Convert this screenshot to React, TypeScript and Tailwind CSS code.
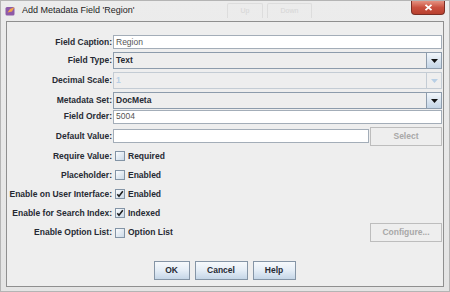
import React from 'react';

const Check: React.FC<{ checked?: boolean }> = ({ checked }) => (
  <span className="ml-[2px] w-[10px] h-[10px] shrink-0 border border-[#8394a6] bg-linear-to-br from-[#fbfcfe] to-[#cbd9e7] flex items-center justify-center">
    {checked && (
      <svg width="8" height="8" viewBox="0 0 8 8">
        <path d="M1.3 4.2 L3 6.3 L6.8 1.2" stroke="#1c1c1c" strokeWidth="1.5" fill="none" />
      </svg>
    )}
  </span>
);

const Row: React.FC<{ label: string; className?: string; children?: React.ReactNode }> = ({ label, className, children }) => (
  <div className={`flex items-center ${className ?? ''}`}>
    <div className="w-[105px] mr-[1px] shrink-0 text-right font-bold text-[8.5px] leading-none text-[#262a33]">{label}</div>
    <div className="flex-1 flex items-center min-w-0 h-full">{children}</div>
  </div>
);

const Combo: React.FC<{ value: string; disabled?: boolean }> = ({ value, disabled }) => (
  <div className={`flex-1 h-[17px] flex border ${disabled ? 'border-[#c4ccd4]' : 'border-[#8d9cac]'} bg-[#eeeeee]`}>
    <div className={`flex-1 flex items-center pl-[2px] text-[8.5px] font-bold ${disabled ? 'text-[#b8cfe5]' : 'text-[#262a33]'}`}>{value}</div>
    <div className={`w-[15px] flex items-center justify-center border-l ${disabled ? 'border-[#c4ccd4] bg-[#eeeeee]' : 'border-[#8d9cac] bg-linear-to-b from-[#f2f6fa] to-[#c4d5e6]'}`}>
      <svg width="7" height="4" viewBox="0 0 7 4">
        <path d="M0 0 H7 L3.5 4 Z" fill={disabled ? '#b8cfe5' : '#111'} />
      </svg>
    </div>
  </div>
);

const Field: React.FC<{ value?: string; className?: string }> = ({ value, className }) => (
  <div className={`h-[14px] flex items-center border border-[#a3adb8] bg-white pl-[2px] text-[8.5px] text-[#555] ${className ?? 'flex-1'}`}>
    {value}
  </div>
);

const Btn: React.FC<{ label: string; w: string }> = ({ label, w }) => (
  <div className={`${w} h-[19px] flex items-center justify-center border border-[#8595a6] bg-linear-to-b from-[#f6f9fc] via-[#e4edf6] to-[#c5d6e7] text-[8.5px] font-bold text-[#262a33]`}>
    {label}
  </div>
);

const DisabledBtn: React.FC<{ label: string }> = ({ label }) => (
  <div className="w-[72px] h-[19px] shrink-0 flex items-center justify-center border border-[#bdbdbd] bg-[#eeeeee] text-[8.5px] font-bold text-[#a8a8a8]">
    {label}
  </div>
);

export default function App() {
  return (
    <div className="w-[450px] h-[292px] flex flex-col bg-linear-to-b from-[#ececec] to-[#e4e4e4] border border-[#b4b4b4] font-['Liberation_Sans',Arial,sans-serif] overflow-hidden">
      {/* Title bar */}
      <div className="h-[20px] shrink-0 flex items-start">
        <div className="w-[226px] shrink-0 flex items-center h-[19px] pl-[4px]">
          <svg width="11" height="10" viewBox="0 0 11 10">
            <rect x="0.5" y="1" width="9" height="8.5" rx="1.5" fill="#8e5aa8" />
            <path d="M2.5 6.5 L5 3 L9.5 1 L7 5.5 Z" fill="#f3a64a" />
          </svg>
          <span className="ml-[6px] text-[9px] text-[#1e1e1e] whitespace-nowrap">Add Metadata Field 'Region'</span>
        </div>
        <div className="flex gap-[4px] mt-[2px] opacity-50">
          <div className="w-[36px] h-[15px] border border-b-0 border-[#cfcfcf] rounded-t-[2px] flex items-center justify-center text-[7px] text-[#c0c0c0]">Up</div>
          <div className="w-[45px] h-[15px] border border-b-0 border-[#cfcfcf] rounded-t-[2px] flex items-center justify-center text-[7px] text-[#c0c0c0]">Down</div>
        </div>
        <div className="flex-1" />
        <div className="w-[34px] h-[14px] mr-[4px] rounded-b-[4px] border border-t-0 border-[#7a2e25] bg-linear-to-b from-[#e49181] via-[#c9503f] to-[#b8402f] flex items-center justify-center">
          <svg width="9" height="7" viewBox="0 0 9 7">
            <path d="M1.5 0.8 L7.5 6.2 M7.5 0.8 L1.5 6.2" stroke="#ffffff" strokeWidth="1.8" />
          </svg>
        </div>
      </div>

      {/* Content panel */}
      <div className="flex-1 mx-[5px] mb-[4px] border border-[#8f8f8f] bg-[#eeeeee] flex flex-col pt-[13px] pr-[1px]">
        <Row label="Field Caption:" className="h-[14px]">
          <Field value="Region" />
        </Row>
        <Row label="Field Type:" className="h-[17px] mt-[3px]">
          <Combo value="Text" />
        </Row>
        <Row label="Decimal Scale:" className="h-[17px] mt-[3px]">
          <Combo value="1" disabled />
        </Row>
        <Row label="Metadata Set:" className="h-[17px] mt-[3px]">
          <Combo value="DocMeta" />
        </Row>
        <Row label="Field Order:" className="h-[13px] mt-[1px]">
          <Field value="5004" className="flex-1 h-[13px]" />
        </Row>
        <Row label="Default Value:" className="h-[18px] mt-[4px]">
          <Field className="flex-1 mr-[1px]" />
          <DisabledBtn label="Select" />
        </Row>
        <Row label="Require Value:" className="h-[18px] mt-[2px]">
          <Check />
          <span className="ml-[3px] text-[8.5px] font-bold text-[#262a33]">Required</span>
        </Row>
        <Row label="Placeholder:" className="h-[18px] mt-[1px]">
          <Check />
          <span className="ml-[3px] text-[8.5px] font-bold text-[#262a33]">Enabled</span>
        </Row>
        <Row label="Enable on User Interface:" className="h-[18px] mt-[1px]">
          <Check checked />
          <span className="ml-[3px] text-[8.5px] font-bold text-[#262a33]">Enabled</span>
        </Row>
        <Row label="Enable for Search Index:" className="h-[18px] mt-[1px]">
          <Check checked />
          <span className="ml-[3px] text-[8.5px] font-bold text-[#262a33]">Indexed</span>
        </Row>
        <Row label="Enable Option List:" className="h-[19px] mt-[1px]">
          <Check />
          <span className="ml-[3px] text-[8.5px] font-bold text-[#262a33]">Option List</span>
          <div className="flex-1" />
          <DisabledBtn label="Configure..." />
        </Row>
        <div className="mt-[19px] flex justify-center gap-[5px]">
          <Btn label="OK" w="w-[36px]" />
          <Btn label="Cancel" w="w-[53px]" />
          <Btn label="Help" w="w-[43px]" />
        </div>
      </div>
    </div>
  );
}
